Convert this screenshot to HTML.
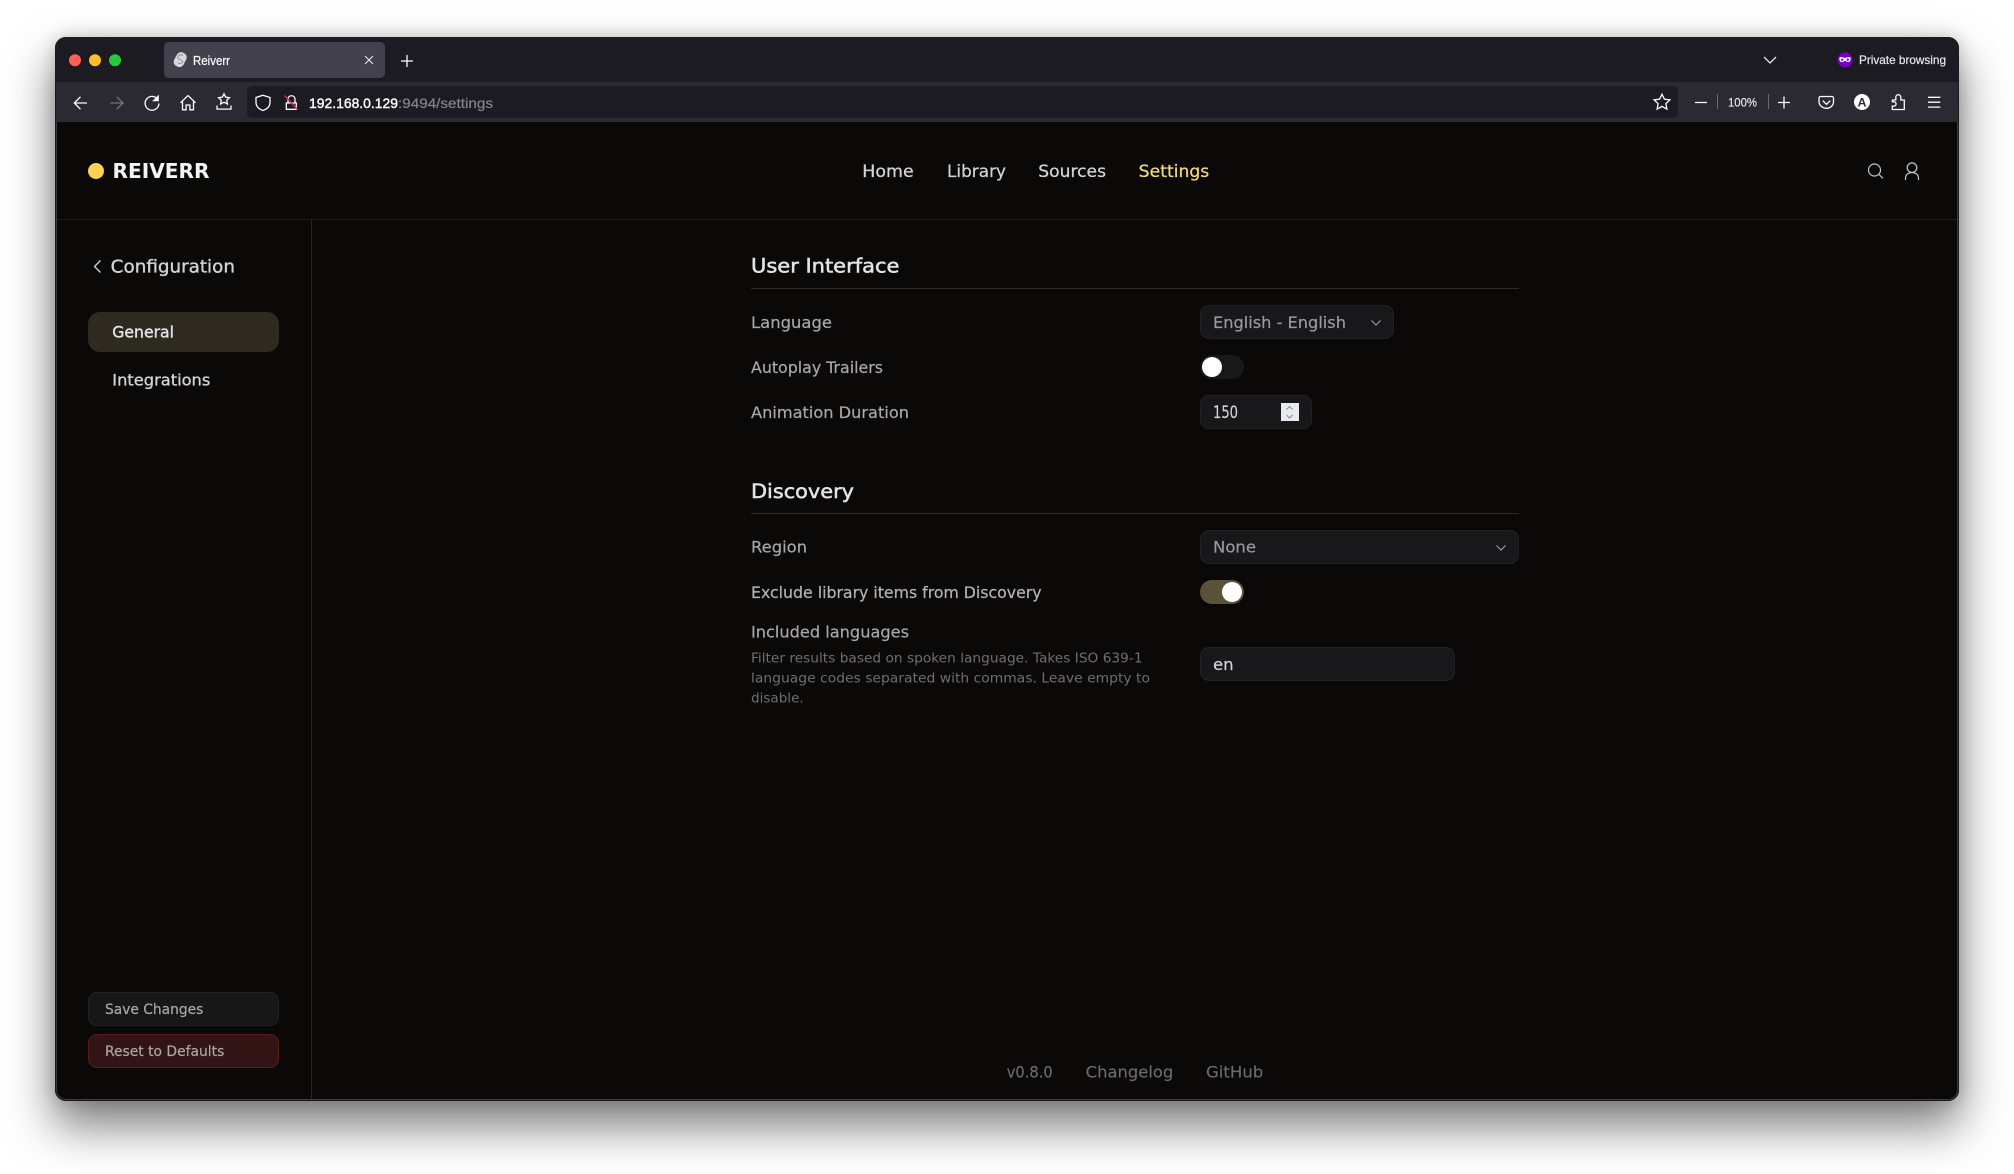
<!DOCTYPE html>
<html lang="en">
<head>
<meta charset="utf-8">
<title>Reiverr</title>
<style>
html,body{margin:0;padding:0;width:2014px;height:1174px;overflow:hidden;background:#fff}
div{box-sizing:border-box;position:absolute}
#win{left:55px;top:37px;width:1904px;height:1064px;border-radius:11px;background:#0a0908;box-shadow:0 24px 46px 2px rgba(0,0,0,.5),0 0 16px rgba(0,0,0,.18)}
#inner{left:0;top:0;width:1904px;height:1064px;border-radius:11px;overflow:hidden;border:1px solid #1a1a1a;box-shadow:inset 0 0 0 1px #3c3c40}
#tabbar{left:0;top:0;right:0;height:44px;background:#1c1b22;border-radius:10px 10px 0 0}
#toolbar{left:0;top:44px;right:0;height:40px;background:#2b2a33}
#tab{left:164px;top:42px;width:221px;height:36px;background:#42414d;border-radius:5px;position:fixed}
#url{left:247px;top:86px;width:1431px;height:32px;background:#1c1b22;border-radius:5px;position:fixed}
.f{position:fixed}
.ctl{position:fixed;background:#18181a;border:1px solid #232326;border-radius:9px}
svg{position:fixed;left:0;top:0}
text{font-family:"DejaVu Sans","Liberation Sans",sans-serif}
</style>
</head>
<body>
<div id="win">
  <div id="inner">
    <div id="tabbar"></div>
    <div id="toolbar"></div>
  </div>
</div>
<div id="tab"></div>
<div id="url"></div>
<div class="f" style="left:57px;top:219px;width:1900px;height:1px;background:#1f1f1f"></div>
<div class="f" style="left:311px;top:220px;width:1px;height:879px;background:#262626"></div>
<div class="f" style="left:88px;top:312px;width:191px;height:40px;border-radius:12px;background:#2e2a1f"></div>
<div class="f" style="left:88px;top:992px;width:191px;height:34px;border-radius:9px;background:#171717;border:1px solid #222"></div>
<div class="f" style="left:88px;top:1034px;width:191px;height:34px;border-radius:9px;background:#321414;border:1px solid #5c1a1a"></div>
<div class="f" style="left:751px;top:288px;width:768px;height:1px;background:#2a2a2a"></div>
<div class="f" style="left:751px;top:513px;width:768px;height:1px;background:#2a2a2a"></div>
<div class="ctl" style="left:1200px;top:305px;width:194px;height:34px"></div>
<div class="f" style="left:1200px;top:355px;width:44px;height:24px;border-radius:12px;background:#18181a"></div>
<div class="f" style="left:1202px;top:357px;width:20px;height:20px;border-radius:50%;background:#fff"></div>
<div class="ctl" style="left:1200px;top:395px;width:112px;height:34px"></div>
<div class="f" style="left:1281px;top:403px;width:18px;height:18px;background:#e9e9f0"></div>
<div class="ctl" style="left:1200px;top:530px;width:319px;height:34px"></div>
<div class="f" style="left:1200px;top:580px;width:44px;height:24px;border-radius:12px;background:#5a5238"></div>
<div class="f" style="left:1222px;top:582px;width:20px;height:20px;border-radius:50%;background:#fff"></div>
<div class="ctl" style="left:1200px;top:647px;width:255px;height:34px"></div>

<svg width="2014" height="1174" viewBox="0 0 2014 1174" xmlns="http://www.w3.org/2000/svg">
  <!-- traffic lights -->
  <circle cx="75" cy="60.3" r="6" fill="#ff5f57"/>
  <circle cx="95" cy="60.3" r="6" fill="#febc2e"/>
  <circle cx="115" cy="60.3" r="6" fill="#28c840"/>
  <!-- tab favicon -->
  <g transform="rotate(28 180 59.5)"><rect x="175" y="52" width="10.5" height="15" rx="4.5" fill="#d8d8dc"/></g>
  <path d="M183 55.5c-2-1.6-4.6-.4-5 1.4-.3 1.6 1 2.4 2.4 2.800 1.500.5 2.600 1.300 2 2.700-.6 1.300-2.600 1.600-4.400.4" fill="none" stroke="#9a99a2" stroke-width="1.200"/>
  <text x="193" y="65" font-size="12.500" fill="#fbfbfe" stroke="#fbfbfe" stroke-width=".2" textLength="37" lengthAdjust="spacingAndGlyphs" style="font-family:'Liberation Sans',sans-serif">Reiverr</text>
  <path d="M365 56l8 8M373 56l-8 8" stroke="#e4e4ea" stroke-width="1.100"/>
  <path d="M401 61h12M407 55v12" stroke="#fbfbfe" stroke-width="1.300"/>
  <path d="M1764 57l6 6 6-6" fill="none" stroke="#e4e4ea" stroke-width="1.300"/>
  <!-- private mask -->
  <circle cx="1845" cy="60" r="7.500" fill="#7500c4"/>
  <path d="M1839.500 57.500c2-.7 3.600-.3 5.500.6 1.900-.9 3.500-1.300 5.500-.6.5 2-.1 4.500-2.400 4.500-1.400 0-2.200-1-3.100-1.300-.9.3-1.700 1.300-3.100 1.300-2.300 0-2.900-2.500-2.400-4.500z" fill="#fff"/>
  <circle cx="1842.200" cy="59.700" r="1.200" fill="#7500c4"/><circle cx="1847.800" cy="59.700" r="1.200" fill="#7500c4"/>
  <text x="1859" y="64" font-size="12" fill="#e8e8ee" stroke="#e8e8ee" stroke-width=".2" textLength="87" lengthAdjust="spacingAndGlyphs" style="font-family:'Liberation Sans',sans-serif">Private browsing</text>

  <!-- toolbar left -->
  <g fill="none" stroke="#fbfbfe" stroke-width="1.300">
    <path d="M87 103H74.500M80.500 96.800l-6.200 6.200 6.200 6.200"/>
    <path d="M123 103H110.500M116.800 96.800l6.200 6.200-6.200 6.200" stroke="#75747c"/>
    <path d="M158.300 100.500a6.900 6.900 0 1 0 .6 3"/>
    <path d="M188 95.500l-7.500 7.300M188 95.500l7.500 7.300M182.500 101.500v8.300h3.600v-4.800h3.800v4.800h3.600v-8.300"/>
    <path d="M224 93.800l1.700 3.400 3.700.5-2.700 2.600.7 3.700-3.400-1.800-3.400 1.800.7-3.700-2.700-2.600 3.700-.5z"/>
    <path d="M217 105.500v3.600h14v-3.600"/>
    <path d="M263 95.200l7 2.300v4.800c0 3.900-2.800 6.800-7 8.200-4.200-1.400-7-4.300-7-8.200v-4.800z"/>
    <path d="M286.300 103h10v6.300h-10zM288 103v-3.800c0-4.600 7-4.600 7 0V103"/>
  </g>
  <path d="M158.800 94.600v6.600h-6.600z" fill="#fbfbfe"/>
  <path d="M284.500 95.500l13 14" stroke="#e22850" stroke-width="1.300"/>
  <text x="309" y="108" font-size="14" fill="#fbfbfe" stroke="#fbfbfe" stroke-width=".4" textLength="89" lengthAdjust="spacingAndGlyphs" style="font-family:'Liberation Sans',sans-serif">192.168.0.129</text>
  <text x="398" y="108" font-size="14" fill="#85848c" stroke="#85848c" stroke-width=".2" textLength="95" lengthAdjust="spacingAndGlyphs" style="font-family:'Liberation Sans',sans-serif">:9494/settings</text>

  <!-- toolbar right -->
  <g fill="none" stroke="#fbfbfe" stroke-width="1.300">
    <path d="M1662 94.200l2.400 5 5.500.7-4 3.800 1 5.400-4.900-2.700-4.900 2.700 1-5.400-4-3.800 5.500-.7z"/>
    <path d="M1695 102.500h12M1778 102.500h12M1784 96.500v12"/>
    <path d="M1820.500 96.500h11.500a1.500 1.500 0 0 1 1.500 1.500v3.500c0 4-3 6.800-7 6.800s-7.500-2.800-7.500-6.800V98a1.500 1.500 0 0 1 1.500-1.500z"/>
    <path d="M1822.800 100.700l3.700 3.600 3.700-3.600"/>
    <path d="M1892.500 100h3.300v-2.800a2.500 2.500 0 0 1 5 0v2.800h3.500v9.500h-12v-3.300h1.500a2.200 2.200 0 0 0 0-4.500h-1.500z"/>
    <path d="M1928 97.300h12.300M1928 102.200h12.300M1928 107.100h12.300"/>
  </g>
  <path d="M1717.500 94v15M1768.500 94v15" stroke="#6a6972" stroke-width="1"/>
  <text x="1728" y="106.500" font-size="11.500" fill="#e8e8ee" stroke="#e8e8ee" stroke-width=".15" textLength="29" lengthAdjust="spacingAndGlyphs" style="font-family:'Liberation Sans',sans-serif">100%</text>
  <circle cx="1862" cy="102" r="8" fill="#fff"/>
  <text x="1857.700" y="106.300" font-size="11.500" font-weight="700" fill="#2b2a33" textLength="8.800" lengthAdjust="spacingAndGlyphs" style="font-family:'Liberation Sans',sans-serif">A</text>

  <!-- header -->
  <circle cx="96" cy="171" r="8" fill="#fdd34f"/>
  <text x="112.500" y="178" font-size="20" font-weight="700" fill="#f4f4f5" textLength="97" lengthAdjust="spacingAndGlyphs">REIVERR</text>
  <g font-size="16.500" fill="#d4d4d8" stroke="#d4d4d8" stroke-width=".25">
    <text x="862.300" y="177" textLength="51.400" lengthAdjust="spacingAndGlyphs">Home</text>
    <text x="947" y="177" textLength="59" lengthAdjust="spacingAndGlyphs">Library</text>
    <text x="1038.300" y="177" textLength="67.700" lengthAdjust="spacingAndGlyphs">Sources</text>
    <text x="1138.700" y="177" textLength="70.600" lengthAdjust="spacingAndGlyphs" fill="#f3d97a" stroke="#f3d97a">Settings</text>
  </g>
  <g fill="none" stroke="#c8c8cc" stroke-width="1.200">
    <circle cx="1874.500" cy="170" r="6"/><path d="M1879 174.500l4 3.800"/>
    <circle cx="1912" cy="167.700" r="4.800"/><path d="M1905.500 180v-1.500c0-3.700 2.800-6 6.500-6s6.500 2.300 6.500 6v1.500"/>
  </g>

  <!-- sidebar -->
  <path d="M100.500 260.500l-6 6 6 6" fill="none" stroke="#d4d4d8" stroke-width="1.300"/>
  <text x="110.700" y="272.700" font-size="17.500" fill="#d4d4d8" stroke="#d4d4d8" stroke-width=".35" textLength="124.300" lengthAdjust="spacingAndGlyphs">Configuration</text>
  <text x="112.300" y="337.700" font-size="16" fill="#e4e4e7" stroke="#e4e4e7" stroke-width=".4" textLength="61.700" lengthAdjust="spacingAndGlyphs">General</text>
  <text x="112.300" y="385.700" font-size="16" fill="#d4d4d8" stroke="#d4d4d8" stroke-width=".35" textLength="98" lengthAdjust="spacingAndGlyphs">Integrations</text>
  <text x="105" y="1014" font-size="14.500" fill="#a8a8ac" stroke="#a8a8ac" stroke-width=".2" textLength="98.300" lengthAdjust="spacingAndGlyphs">Save Changes</text>
  <text x="105" y="1056" font-size="14.500" fill="#aca4a4" stroke="#aca4a4" stroke-width=".2" textLength="119.300" lengthAdjust="spacingAndGlyphs">Reset to Defaults</text>

  <!-- section 1 -->
  <text x="751" y="272.700" font-size="19.500" fill="#e4e4e7" stroke="#e4e4e7" stroke-width=".5" textLength="148.400" lengthAdjust="spacingAndGlyphs">User Interface</text>
  <g font-size="16" fill="#a8a8ac" stroke="#a8a8ac" stroke-width=".2">
    <text x="751" y="328" textLength="81" lengthAdjust="spacingAndGlyphs">Language</text>
    <text x="751" y="373" textLength="132" lengthAdjust="spacingAndGlyphs">Autoplay Trailers</text>
    <text x="751" y="418" textLength="158" lengthAdjust="spacingAndGlyphs">Animation Duration</text>
    <text x="1213" y="328" textLength="133" lengthAdjust="spacingAndGlyphs" fill="#9a9aa0" stroke="#9a9aa0">English - English</text>
    <text x="1213" y="418" font-size="17" textLength="25" lengthAdjust="spacingAndGlyphs" fill="#d4d4d8" stroke="#d4d4d8">150</text>
  </g>
  <path d="M1371.500 320.500l4.500 4.500 4.500-4.500M1496.500 545.500l4.500 4.500 4.500-4.500" fill="none" stroke="#a1a1a6" stroke-width="1.100"/>
  <path d="M1286.500 409.500l3-3 3 3M1286.500 415l3 3 3-3" fill="none" stroke="#8c8c94" stroke-width="1.100"/>

  <!-- section 2 -->
  <text x="751" y="498" font-size="19.500" fill="#e4e4e7" stroke="#e4e4e7" stroke-width=".5" textLength="103" lengthAdjust="spacingAndGlyphs">Discovery</text>
  <g font-size="16" fill="#a8a8ac" stroke="#a8a8ac" stroke-width=".2">
    <text x="751" y="552.500" textLength="56" lengthAdjust="spacingAndGlyphs">Region</text>
    <text x="751" y="598" textLength="290.600" lengthAdjust="spacingAndGlyphs" fill="#b4b4b8" stroke="#b4b4b8">Exclude library items from Discovery</text>
    <text x="751" y="637.500" textLength="158" lengthAdjust="spacingAndGlyphs">Included languages</text>
    <text x="1213" y="552.500" textLength="43" lengthAdjust="spacingAndGlyphs" fill="#9a9aa0" stroke="#9a9aa0">None</text>
    <text x="1213" y="670" textLength="20.600" lengthAdjust="spacingAndGlyphs" fill="#d4d4d8" stroke="#d4d4d8">en</text>
  </g>
  <g font-size="13.500" fill="#6e6e74">
    <text x="751" y="662.700" textLength="391.600" lengthAdjust="spacingAndGlyphs">Filter results based on spoken language. Takes ISO 639-1</text>
    <text x="751" y="682.700" textLength="399" lengthAdjust="spacingAndGlyphs">language codes separated with commas. Leave empty to</text>
    <text x="751" y="702.700" textLength="52.700" lengthAdjust="spacingAndGlyphs">disable.</text>
  </g>

  <!-- footer -->
  <g font-size="16" fill="#6b6b72" stroke="#6b6b72" stroke-width=".15">
    <text x="1006.700" y="1077.500" textLength="46" lengthAdjust="spacingAndGlyphs">v0.8.0</text>
    <text x="1085.700" y="1077.500" textLength="87.600" lengthAdjust="spacingAndGlyphs">Changelog</text>
    <text x="1206" y="1077.500" textLength="57.300" lengthAdjust="spacingAndGlyphs">GitHub</text>
  </g>
</svg>
</body>
</html>
